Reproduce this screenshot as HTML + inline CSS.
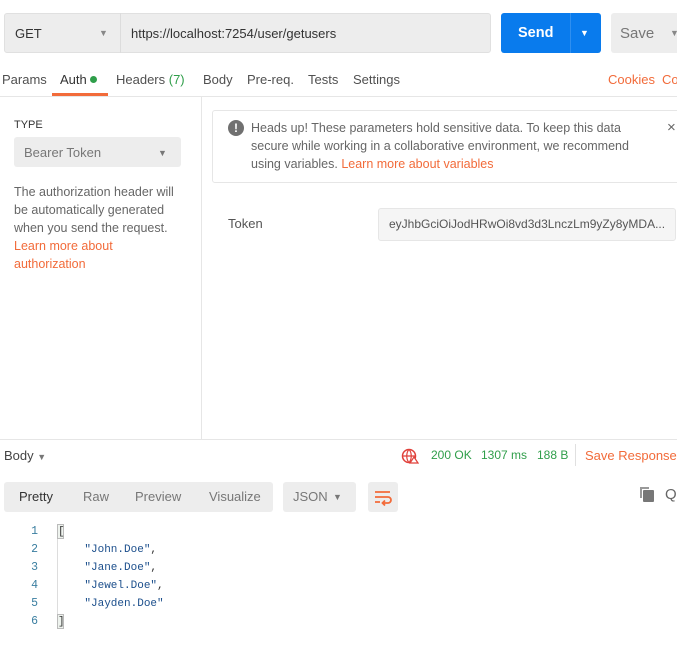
<!DOCTYPE html>
<html><head><style>
*{margin:0;padding:0;box-sizing:border-box}
body{width:677px;height:653px;background:#fff;font-family:"Liberation Sans",sans-serif;font-size:12.5px;color:#505050;position:relative;overflow:hidden}
.a{position:absolute;white-space:nowrap}
.o{color:#f26b3a}
.g{color:#2f9e4a}
.mono{font-family:"Liberation Mono",monospace;font-size:11px}
</style></head><body>
<div class="a" style="left:4px;top:13px;width:487px;height:40px;background:#ededed;border:1px solid #e0e0e0;border-radius:3px"></div>
<div class="a" style="left:120px;top:13px;width:1px;height:40px;background:#dcdcdc"></div>
<div class="a" style="left:15px;top:26px;font-size:13px;color:#333">GET</div>
<div class="a" style="left:99px;top:28px;font-size:9px;color:#888">▼</div>
<div class="a" style="left:131px;top:26px;font-size:13px;color:#333">https://localhost:7254/user/getusers</div>
<div class="a" style="left:501px;top:13px;width:100px;height:40px;background:#097bed;border-radius:3px"></div>
<div class="a" style="left:570px;top:13px;width:1px;height:40px;background:#2f8ff0"></div>
<div class="a" style="left:518px;top:25px;font-size:14.5px;font-weight:600;color:#fff">Send</div>
<div class="a" style="left:580px;top:28px;font-size:9px;color:#fff">▼</div>
<div class="a" style="left:611px;top:13px;width:70px;height:40px;background:#ededed;border-radius:3px"></div>
<div class="a" style="left:620px;top:25px;font-size:15px;color:#777">Save</div>
<div class="a" style="left:670px;top:28px;font-size:9px;color:#888">▼</div>

<div class="a" style="left:2px;top:72px;font-size:13px">Params</div>
<div class="a" style="left:60px;top:72px;font-size:13px;color:#333">Auth <span style="display:inline-block;width:7px;height:7px;border-radius:50%;background:#2f9e4a;vertical-align:1px"></span></div>
<div class="a" style="left:52px;top:93px;width:56px;height:3px;background:#f26b3a"></div>
<div class="a" style="left:116px;top:72px;font-size:13px">Headers <span class="g">(7)</span></div>
<div class="a" style="left:203px;top:72px;font-size:13px">Body</div>
<div class="a" style="left:247px;top:72px;font-size:13px">Pre-req.</div>
<div class="a" style="left:308px;top:72px;font-size:13px">Tests</div>
<div class="a" style="left:353px;top:72px;font-size:13px">Settings</div>
<div class="a o" style="left:608px;top:72px;font-size:13px">Cookies</div>
<div class="a o" style="left:662px;top:72px;font-size:13px">Co</div>
<div class="a" style="left:0;top:96px;width:677px;height:1px;background:#e6e6e6"></div>
<div class="a" style="left:201px;top:97px;width:1px;height:342px;background:#e6e6e6"></div>

<div class="a" style="left:14px;top:119px;font-size:11px;color:#333">TYPE</div>
<div class="a" style="left:14px;top:137px;width:167px;height:30px;background:#ededed;border-radius:3px"></div>
<div class="a" style="left:24px;top:145px;font-size:13px;color:#777">Bearer Token</div>
<div class="a" style="left:158px;top:148px;font-size:9px;color:#777">▼</div>
<div class="a" style="left:14px;top:183px;font-size:12.5px;line-height:18px;color:#666">The authorization header will<br>be automatically generated<br>when you send the request.<br><span class="o">Learn more about<br>authorization</span></div>

<div class="a" style="left:212px;top:110px;width:470px;height:73px;border:1px solid #e6e6e6;border-radius:3px"></div>
<div class="a" style="left:228px;top:120px;width:16px;height:16px;border-radius:50%;background:#707070;color:#fff;font-size:12px;font-weight:bold;text-align:center;line-height:16px">!</div>
<div class="a" style="left:251px;top:119px;font-size:12.5px;line-height:18px;color:#666">Heads up! These parameters hold sensitive data. To keep this data<br>secure while working in a collaborative environment, we recommend<br>using variables. <span class="o">Learn more about variables</span></div>
<div class="a" style="left:667px;top:119px;font-size:15px;color:#666">×</div>

<div class="a" style="left:228px;top:216px;font-size:13px;color:#555">Token</div>
<div class="a" style="left:378px;top:208px;width:298px;height:33px;background:#f5f5f5;border:1px solid #e6e6e6;border-radius:3px"></div>
<div class="a" style="left:389px;top:217px;width:280px;overflow:hidden;text-overflow:ellipsis;font-size:12px;color:#555">eyJhbGciOiJodHRwOi8vd3d3LnczLm9yZy8yMDA...</div>

<div class="a" style="left:0;top:439px;width:677px;height:1px;background:#e6e6e6"></div>
<div class="a" style="left:4px;top:448px;font-size:13px;color:#444">Body <span style="font-size:9px;color:#777">▼</span></div>
<svg class="a" style="left:401px;top:448px" width="18" height="16" viewBox="0 0 18 16"><circle cx="8" cy="8" r="6.5" fill="none" stroke="#e0403a" stroke-width="1.5"/><path d="M1.5 8h13M8 1.5c-3 3-3 10 0 13M8 1.5c3 3 3 10 0 13" fill="none" stroke="#e0403a" stroke-width="1.2"/><path d="M13 9l4 6h-8z" fill="#fff" stroke="#e0403a" stroke-width="1.2"/></svg>
<div class="a g" style="left:431px;top:448px;font-size:12px">200 OK</div>
<div class="a g" style="left:481px;top:448px;font-size:12px">1307 ms</div>
<div class="a g" style="left:537px;top:448px;font-size:12px">188 B</div>
<div class="a" style="left:575px;top:444px;width:1px;height:22px;background:#e0e0e0"></div>
<div class="a o" style="left:585px;top:448px;font-size:13px">Save Response</div>

<div class="a" style="left:4px;top:482px;width:269px;height:30px;background:#ededed;border-radius:3px"></div>
<div class="a" style="left:19px;top:489px;font-size:13px;color:#333">Pretty</div>
<div class="a" style="left:83px;top:489px;font-size:13px;color:#777">Raw</div>
<div class="a" style="left:135px;top:489px;font-size:13px;color:#777">Preview</div>
<div class="a" style="left:209px;top:489px;font-size:13px;color:#777">Visualize</div>
<div class="a" style="left:283px;top:482px;width:73px;height:30px;background:#ededed;border-radius:3px"></div>
<div class="a" style="left:293px;top:489px;font-size:13px;color:#777">JSON</div>
<div class="a" style="left:333px;top:492px;font-size:9px;color:#777">▼</div>
<div class="a" style="left:368px;top:482px;width:30px;height:30px;background:#ededed;border-radius:3px"></div>
<svg class="a" style="left:373px;top:487px" width="20" height="20" viewBox="0 0 20 20"><path d="M2 5h15M2 10h13a3 3 0 0 1 0 6h-5M2 15h5M12 13.5l-2.5 2.5 2.5 2.5" fill="none" stroke="#f26b3a" stroke-width="1.8"/></svg>
<div class="a" style="left:643px;top:490px;width:11px;height:12px;background:#777;border-radius:1px"></div>
<div class="a" style="left:640px;top:487px;width:9px;height:11px;border-left:2px solid #999;border-top:2px solid #999"></div>
<div class="a" style="left:665px;top:486px;font-size:15px;color:#666">Q</div>

<div class="a mono" style="left:30px;top:523px;line-height:18px;color:#3a7ea0;text-align:right;width:8px;font-size:11.5px">1<br>2<br>3<br>4<br>5<br>6</div>
<div class="a" style="left:57px;top:524px;width:7px;height:15px;border:1px solid #bbb;background:#eef3ee"></div>
<div class="a" style="left:57px;top:614px;width:7px;height:15px;border:1px solid #bbb;background:#eef3ee"></div>
<div class="a" style="left:57px;top:539px;width:1px;height:75px;background:#ddd"></div>
<div class="a mono" style="left:58px;top:523px;line-height:18px;color:#333">[<br>&nbsp;&nbsp;&nbsp;&nbsp;<span style="color:#1c4f8c">"John.Doe"</span>,<br>&nbsp;&nbsp;&nbsp;&nbsp;<span style="color:#1c4f8c">"Jane.Doe"</span>,<br>&nbsp;&nbsp;&nbsp;&nbsp;<span style="color:#1c4f8c">"Jewel.Doe"</span>,<br>&nbsp;&nbsp;&nbsp;&nbsp;<span style="color:#1c4f8c">"Jayden.Doe"</span><br>]</div>
</body></html>
